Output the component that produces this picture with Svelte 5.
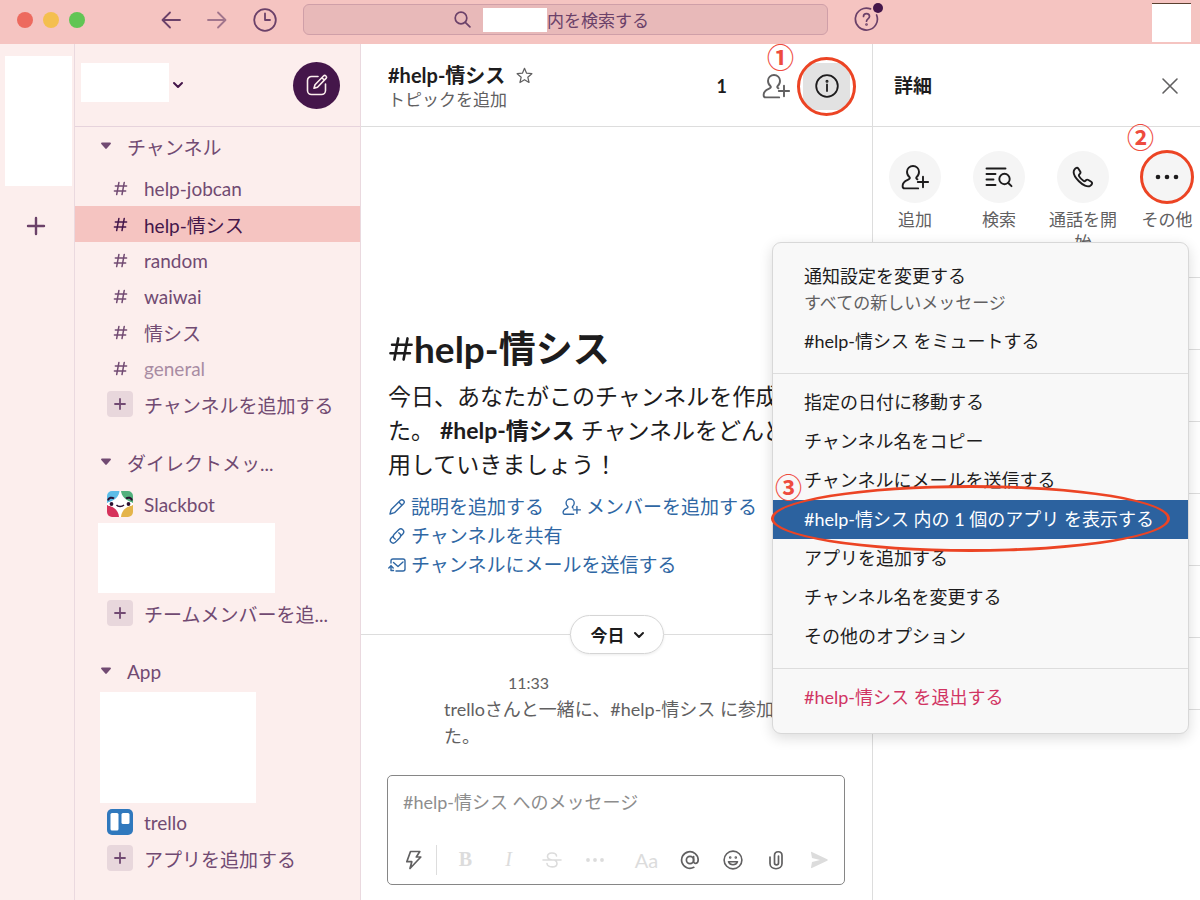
<script>
    let activeChannel = $state('help-情シス');
    let message = $state('');

    const channels = [
        { name: 'help-jobcan' },
        { name: 'help-情シス' },
        { name: 'random' },
        { name: 'waiwai' },
        { name: '情シス' },
        { name: 'general', muted: true }
    ];

    const actions = [
        { label: '追加', icon: 'person' },
        { label: '検索', icon: 'find' },
        { label: '通話を開始', icon: 'phone' },
        { label: 'その他', icon: 'more', step: '②' }
    ];

    const menuGroups = [
        [
            { label: '通知設定を変更する', sub: 'すべての新しいメッセージ' },
            { label: '#help-情シス をミュートする' }
        ],
        [
            { label: '指定の日付に移動する' },
            { label: 'チャンネル名をコピー' },
            { label: 'チャンネルにメールを送信する' },
            { label: '#help-情シス 内の 1 個のアプリ を表示する', selected: true },
            { label: 'アプリを追加する' },
            { label: 'チャンネル名を変更する' },
            { label: 'その他のオプション' }
        ],
        [{ label: '#help-情シス を退出する', danger: true }]
    ];

    const detailRows = [1, 2, 3, 4, 5, 6, 7];
</script>

{#snippet hash(size)}
    <svg class="icon" width={size} height={size} viewBox="0 0 16 16" stroke-width="1.6">
        <path d="M6.3 1.500 3.900 14.500M12 1.500 9.600 14.500M2.500 5.400h12M1.500 10.600h12" />
    </svg>
{/snippet}

{#snippet person(size, weight)}
    <svg class="icon" width={size} height={size} viewBox="0 0 28 28" stroke-width={weight}>
        <path d="M15.500 14.200c1.600-1.200 2.500-3.200 2.500-5.400C18 5.500 15.200 3 12 3S6 5.500 6 8.800c0 2.200 1 4.200 2.600 5.400.6 1.100-.2 1.900-1.900 2.600C3.800 18 1.600 19.700 1.600 23c0 1.500.7 2.400 2 2.400h13.600M15.500 14.200c-.5.800-.2 1.500.9 2.100M22 13.800v10.400M16.800 19h10.400" />
    </svg>
{/snippet}

{#snippet chevron()}
    <svg class="icon" width="12" height="12" viewBox="0 0 12 12" stroke-width="2">
        <path d="m2 4 4 4 4-4" />
    </svg>
{/snippet}

{#snippet sectionHead(title)}
    <button class="section-head">
        <svg width="10" height="8" viewBox="0 0 10 8"><path d="M1 .6h8c.9 0 1.200.8.700 1.400L5.700 6.500c-.4.500-1 .500-1.400 0L.3 2C-.2 1.400.1.600 1 .600z" fill="currentColor" /></svg>
        {title}
    </button>
{/snippet}

{#snippet addRow(label)}
    <button class="row">
        <span class="plus">
            <svg class="icon" width="12" height="12" viewBox="0 0 12 12" stroke-width="1.8"><path d="M6 1v10M1 6h10" /></svg>
        </span>
        <span>{label}</span>
    </button>
{/snippet}

<div class="app">
    <header class="topbar">
        <div class="top-left">
            <div class="lights"><i class="red"></i><i class="yellow"></i><i class="green"></i></div>
            <nav>
                <button aria-label="戻る">
                    <svg class="icon" width="20" height="18" viewBox="0 0 20 18" stroke-width="1.8"><path d="M19 9H2M9 1.500 1.500 9 9 16.500" /></svg>
                </button>
                <button class="dim" aria-label="進む">
                    <svg class="icon" width="20" height="18" viewBox="0 0 20 18" stroke-width="1.8"><path d="M1 9h17M11 1.500 18.500 9 11 16.500" /></svg>
                </button>
                <button aria-label="履歴">
                    <svg class="icon" width="24" height="24" viewBox="0 0 24 24" stroke-width="1.8"><circle cx="12" cy="12" r="10.800" /><path d="M12 5.500V12h5" /></svg>
                </button>
            </nav>
        </div>
        <button class="search">
            <svg class="icon" width="17" height="17" viewBox="0 0 17 17" stroke-width="1.7"><circle cx="7" cy="7" r="5.800" /><path d="m11.300 11.300 4.600 4.600" /></svg>
            <span class="search-name"></span>
            <span>内を検索する</span>
        </button>
        <div class="top-right">
            <button aria-label="ヘルプ">
                <svg class="icon" width="30" height="32" viewBox="0 0 30 32" stroke-width="1.7">
                    <path d="M16.500 5.900A11 11 0 1 0 22.600 12" />
                    <path d="M9.500 13.400c0-3.700 6-3.700 6 0 0 2.500-3 2.300-3 4.800" />
                    <circle cx="12.500" cy="21.500" r=".5" />
                    <circle cx="24" cy="5" r="5" fill="#44164a" stroke="none" />
                </svg>
            </button>
            <div class="me"></div>
        </div>
    </header>

    <div class="body">
        <aside class="rail">
            <div class="workspace"></div>
            <button aria-label="ワークスペースを追加">
                <svg class="icon" width="20" height="20" viewBox="0 0 20 20" stroke-width="2.400"><path d="M10 2v16M2 10h16" /></svg>
            </button>
        </aside>

        <aside class="sidebar">
            <div class="team">
                <button class="team-name" aria-label="ワークスペース"><span></span>{@render chevron()}</button>
                <button class="compose" aria-label="新規メッセージ">
                    <svg class="icon" width="22" height="22" viewBox="0 0 22 22" stroke-width="1.600">
                        <path d="M12 2.500H5.500a4 4 0 0 0-4 4v10a4 4 0 0 0 4 4h10a4 4 0 0 0 4-4V10" />
                        <path d="M8 14.200 9 10.800 17.500 2c1.600-1.500 4 .7 2.500 2.400l-8.500 8.800zM16 3.800l2.300 2.300" />
                    </svg>
                </button>
            </div>

            <section>
                {@render sectionHead('チャンネル')}
                {#each channels as channel}
                    <button
                        class="row"
                        class:active={channel.name === activeChannel}
                        onclick={() => (activeChannel = channel.name)}
                    >
                        <span class="lead">{@render hash(15)}</span>
                        <span class:muted={channel.muted}>{channel.name}</span>
                    </button>
                {/each}
                {@render addRow('チャンネルを追加する')}
            </section>

            <section>
                {@render sectionHead('ダイレクトメッ...')}
                <button class="row">
                    <svg width="26" height="26" viewBox="0 0 26 26">
                        <rect width="26" height="26" rx="5" fill="#fff" />
                        <path d="M5 0h7.500C12 5 9 9 0 12V5a5 5 0 0 1 5-5z" fill="#5cbde8" />
                        <path d="M14 0h7a5 5 0 0 1 5 5v7c-8-3-11.500-7-12-12z" fill="#52b07c" />
                        <path d="M0 14c8 2 11.500 6 12 12H5a5 5 0 0 1-5-5z" fill="#d6325b" />
                        <path d="M26 14c-8 2-11.500 6-12 12h7a5 5 0 0 0 5-5z" fill="#e4b44a" />
                        <path d="M1 9.500c.5-3 4-3.500 6-2M25 9.500c-.5-3-4-3.500-6-2" fill="none" stroke="#2b1030" stroke-width="2" />
                        <path d="M1 11.500h6v2.500l-2 1.500-4-1zM25 11.500h-6v2.500l2 1.500 4-1z" fill="#fff" />
                        <circle cx="4.500" cy="13" r="1.900" fill="#2b1030" />
                        <circle cx="21.500" cy="13" r="1.900" fill="#2b1030" />
                        <path d="M9.500 14c1.500 2 5.500 2 7.500 0" fill="none" stroke="#2b1030" stroke-width="1.300" />
                    </svg>
                    <span>Slackbot</span>
                </button>
                <div class="blank people"></div>
                {@render addRow('チームメンバーを追...')}
            </section>

            <section>
                {@render sectionHead('App')}
                <div class="blank apps"></div>
                <button class="row">
                    <svg width="26" height="26" viewBox="0 0 26 26">
                        <rect width="26" height="26" rx="5" fill="#2f78bd" />
                        <rect x="3.500" y="4" width="8" height="17.500" rx="1.500" fill="#fff" />
                        <rect x="14.500" y="4" width="8" height="11" rx="1.500" fill="#fff" />
                    </svg>
                    <span>trello</span>
                </button>
                {@render addRow('アプリを追加する')}
            </section>
        </aside>

        <main>
            <div class="pane-head">
                <div class="channel">
                    <h2>
                        #help-情シス
                        <svg class="icon" width="17" height="17" viewBox="0 0 18 18" stroke-width="1.300"><path d="m9 1.400 2.200 5.200 5.600.5-4.300 3.700 1.300 5.600L9 13.400l-4.800 3 1.300-5.600L1.200 7.100l5.600-.5z" /></svg>
                    </h2>
                    <p>トピックを追加</p>
                </div>
                <span class="count">1</span>
                <button aria-label="メンバーを追加">{@render person(28, 1.9)}</button>
                <div class="info-wrap">
                    <button class="info" aria-label="詳細">
                        <svg class="icon" width="24" height="24" viewBox="0 0 24 24" stroke-width="1.800"><circle cx="12" cy="12" r="10.800" /><path d="M12 10.500V17" /><circle cx="12" cy="7.200" r=".6" /></svg>
                    </button>
                    <span class="ring"></span>
                    <span class="step">①</span>
                </div>
            </div>

            <div class="history">
                <h1>{@render hash(26)}help-情シス</h1>
                <p class="intro">
                    今日、あなたがこのチャンネルを作成しました。 <b>#help-情シス</b> チャンネルをどんどん活用していきましょう！
                </p>
                <div class="links">
                    <a href="#description">
                        <svg class="icon" width="18" height="18" viewBox="0 0 18 18" stroke-width="1.400"><path d="M2 16l1.200-4.600L12.500 2.300c2-1.800 4.900 1 3.200 3.100L6.500 14.700zM10.800 4l3.200 3.200" /></svg>
                        説明を追加する
                    </a>
                    <a href="#members">{@render person(19, 2)}メンバーを追加する</a>
                    <a href="#share">
                        <svg class="icon" width="18" height="18" viewBox="0 0 18 18" stroke-width="1.400"><path d="M7.200 12.200C5 11 4.800 8.800 6.200 7.300L10.700 2.800c2.800-2.500 6.600 1 4.300 3.900L12.600 9.200M10.800 5.800c2.200 1.200 2.400 3.400 1 4.900L7.300 15.200c-2.800 2.500-6.600-1-4.300-3.900L5.400 8.800" /></svg>
                        チャンネルを共有
                    </a>
                    <a href="#mail">
                        <svg class="icon" width="18" height="18" viewBox="0 0 18 18" stroke-width="1.400"><path d="M3 7V5c0-1.500.7-2 2-2h10c1.300 0 2 .7 2 2v8c0 1.300-.7 2-2 2H8M5.500 6.500l4.500 4 5-4.500M5.500 14.500H3V10M.800 12 3 9.600 5.200 12" /></svg>
                        チャンネルにメールを送信する
                    </a>
                </div>

                <div class="day"><button>今日 {@render chevron()}</button></div>

                <div class="message">
                    <time>11:33</time>
                    <p>trelloさんと一緒に、#help-情シス に参加しました。</p>
                </div>
            </div>

            <div class="composer">
                <textarea rows="1" aria-label="メッセージ" placeholder="#help-情シス へのメッセージ" bind:value={message}></textarea>
                <div class="tools">
                    <button class="shortcut" aria-label="ショートカット">
                        <svg class="icon" width="18" height="20" viewBox="0 0 18 20" stroke-width="1.700"><path d="M5.500 1.500h9.300L11.300 7h4.500L5 18.500l1.800-6.800H1.800z" /></svg>
                    </button>
                    <button class="off serif bold">B</button>
                    <button class="off serif italic">I</button>
                    <button class="off" aria-label="取り消し線">
                        <svg class="icon" width="20" height="18" viewBox="0 0 20 18" stroke-width="1.600"><path d="M1 9h18M14.500 5c-.5-4-9-4-9 .5C5.500 7.500 7 8.500 10 9M5 12.500c.5 4.500 10 4.500 10 0 0-1.500-.7-2.500-2-3.200" /></svg>
                    </button>
                    <button class="off" aria-label="その他の書式">
                        <svg width="18" height="4" viewBox="0 0 18 4" fill="currentColor"><circle cx="2" cy="2" r="1.900" /><circle cx="9" cy="2" r="1.900" /><circle cx="16" cy="2" r="1.900" /></svg>
                    </button>
                    <span class="fill"></span>
                    <button class="off">Aa</button>
                    <button aria-label="メンション">
                        <svg class="icon" width="20" height="20" viewBox="0 0 20 20" stroke-width="1.700"><circle cx="10" cy="10" r="3.600" /><path d="M13.600 6.600v4.600c0 3.200 4.600 3 4.600-1.400A8.300 8.300 0 1 0 13.800 17.300" /></svg>
                    </button>
                    <button aria-label="絵文字">
                        <svg class="icon" width="20" height="20" viewBox="0 0 20 20" stroke-width="1.600"><circle cx="10" cy="10" r="8.900" /><path d="M5.500 11.800c1.500 4 7.500 4 9 0z" /><circle cx="7.200" cy="7.500" r=".5" /><circle cx="12.800" cy="7.500" r=".5" /></svg>
                    </button>
                    <button aria-label="ファイルを添付">
                        <svg class="icon" width="16" height="20" viewBox="0 0 16 20" stroke-width="1.700"><path d="M2 7v6.500c0 7 12 7 12 0V5.500c0-5-7.500-5-7.500 0V13c0 2.500 4 2.500 4 0V6" /></svg>
                    </button>
                    <button class="off" aria-label="送信">
                        <svg width="18" height="18" viewBox="0 0 18 18"><path d="M1 1.500c0-.6.4-.8.900-.6l15.300 7.300c.7.400.7 1.200 0 1.600L1.900 17.100c-.5.200-.9 0-.9-.6l1-5.500L10 9 2 7z" fill="currentColor" /></svg>
                    </button>
                </div>
            </div>
        </main>

        <aside class="details">
            <div class="pane-head">
                <h2>詳細</h2>
                <button aria-label="閉じる">
                    <svg class="icon" width="18" height="18" viewBox="0 0 18 18" stroke-width="1.600"><path d="m2 2 14 14M16 2 2 16" /></svg>
                </button>
            </div>
            <div class="actions">
                {#each actions as action}
                    <button>
                        <span class="disc">
                            {#if action.icon === 'person'}
                                {@render person(28, 1.9)}
                            {:else if action.icon === 'find'}
                                <svg class="icon" width="28" height="22" viewBox="0 0 28 22" stroke-width="1.900"><path d="M1.500 2.500h19M1.500 8h9M1.500 13.500h7M1.500 19h9" /><circle cx="19.500" cy="13" r="5.200" /><path d="m23.300 17 3.200 3.200" /></svg>
                            {:else if action.icon === 'phone'}
                                <svg class="icon" width="22" height="22" viewBox="0 0 22 22" stroke-width="1.900"><path d="M2.500 3.500C3.500 2 5.200.900 6.300 2.500l1.900 3c.7 1.200.2 2-.7 2.700-.8.700-.8 1.300-.3 2.200 1 1.800 2.500 3.300 4.200 4.400.9.600 1.600.5 2.300-.3.800-.9 1.600-1.200 2.700-.5l2.800 1.800c1.800 1.200.5 2.800-.9 3.900C13 23.500-1.500 9.500 2.500 3.500z" /></svg>
                            {:else}
                                <svg width="24" height="6" viewBox="0 0 24 6" fill="currentColor"><circle cx="3" cy="3" r="2.300" /><circle cx="12" cy="3" r="2.300" /><circle cx="21" cy="3" r="2.300" /></svg>
                                <span class="ring"></span>
                                <span class="step">{action.step}</span>
                            {/if}
                        </span>
                        <span class="label">{action.label}</span>
                    </button>
                {/each}
            </div>
            <div class="rows">
                {#each detailRows as row (row)}
                    <div></div>
                {/each}
            </div>

            <div class="menu" role="menu">
                {#each menuGroups as group}
                    <div class="group">
                        {#each group as item}
                            <button role="menuitem" class:selected={item.selected} class:danger={item.danger}>
                                {item.label}
                                {#if item.sub}<small>{item.sub}</small>{/if}
                                {#if item.selected}
                                    <span class="oval"></span>
                                    <span class="step">③</span>
                                {/if}
                            </button>
                        {/each}
                    </div>
                {/each}
            </div>
        </aside>
    </div>
</div>

<style>
    :global(body) {
        margin: 0;
    }

    .app {
        display: flex;
        flex-direction: column;
        height: 100vh;
        overflow: hidden;
        font-family: Lato, 'Noto Sans CJK JP', sans-serif;
        font-size: 18px;
        color: #1d1c1d;
        background: #fff;
    }

    .app *,
    .app *::before {
        box-sizing: border-box;
    }

    button {
        display: flex;
        align-items: center;
        margin: 0;
        padding: 0;
        border: 0;
        background: none;
        color: inherit;
        font: inherit;
        cursor: pointer;
    }

    h1, h2, p {
        margin: 0;
    }

    svg {
        flex: none;
    }

    .icon {
        fill: none;
        stroke: currentColor;
        stroke-linecap: round;
        stroke-linejoin: round;
    }

    /* top bar */
    .topbar {
        display: flex;
        align-items: center;
        flex: none;
        height: 44px;
        padding-bottom: 5px;
        background: #f5c4c1;
        color: #6b4169;
    }

    .top-left {
        display: flex;
        align-items: center;
        justify-content: space-between;
        width: 303px;
        padding: 0 26px 0 17px;
    }

    .lights {
        display: flex;
        gap: 10px;
    }

    .lights i {
        width: 16px;
        height: 16px;
        border-radius: 50%;
    }

    .red { background: #ed6a5e; }
    .yellow { background: #f4bf4f; }
    .green { background: #61c554; }

    nav {
        display: flex;
        align-items: center;
        gap: 26px;
    }

    nav .dim {
        opacity: 0.6;
    }

    .search {
        flex: 1;
        justify-content: center;
        height: 31px;
        padding-right: 28px;
        border: 1px solid #cf9fa8;
        border-radius: 6px;
        background: #e8b9b9;
        font-size: 17px;
    }

    .search-name {
        width: 64px;
        height: 24px;
        margin-left: 12px;
        background: #fff;
    }

    .top-right {
        display: flex;
        align-items: center;
        justify-content: space-between;
        width: 372px;
        height: 39px;
        padding: 0 9px 0 26px;
    }

    .top-right button {
        padding-bottom: 2px;
    }

    .me {
        align-self: flex-end;
        width: 39px;
        height: 39px;
        margin-bottom: -3px;
        border-top: 1px solid #5a4030;
        background: #fff;
    }

    .body {
        display: flex;
        flex: 1;
        min-height: 0;
    }

    /* workspace rail */
    .rail {
        display: flex;
        flex-direction: column;
        align-items: center;
        flex: none;
        gap: 30px;
        width: 75px;
        padding: 12px 2px 0 0;
        border-right: 1px solid #ead9df;
        background: #fceeed;
        color: #6b4169;
    }

    .workspace {
        align-self: flex-end;
        width: 67px;
        height: 130px;
        background: #fff;
    }

    /* channel list */
    .sidebar {
        flex: none;
        width: 286px;
        border-right: 1px solid #ead9df;
        background: #fceeed;
        color: #714a72;
        font-size: 19px;
    }

    .team {
        display: flex;
        align-items: center;
        justify-content: space-between;
        height: 83px;
        padding: 0 20px 0 6px;
        border-bottom: 1px solid #e6d3dc;
    }

    .team-name {
        gap: 3px;
        color: #44164a;
    }

    .team-name span {
        width: 88px;
        height: 39px;
        margin-bottom: 6px;
        background: #fff;
    }

    .compose {
        justify-content: center;
        width: 47px;
        height: 47px;
        border-radius: 50%;
        background: #44164a;
        color: #fceeed;
    }

    section + section {
        margin-top: 21px;
    }

    .section-head {
        gap: 16px;
        width: 100%;
        height: 38px;
        margin-bottom: 5px;
        padding-left: 26px;
    }

    .row {
        gap: 11px;
        width: 100%;
        height: 36px;
        padding-left: 32px;
        white-space: nowrap;
    }

    .row.active {
        background: #f5c4c1;
        color: #44164a;
    }

    .lead,
    .plus {
        display: grid;
        place-items: center;
        width: 26px;
        height: 26px;
    }

    .plus {
        border-radius: 4px;
        background: #e8d7dc;
    }

    .muted {
        opacity: 0.6;
    }

    .blank {
        background: #fff;
    }

    .people {
        width: 177px;
        height: 70px;
        margin: 1px 0 2px 23px;
    }

    .apps {
        width: 156px;
        height: 111px;
        margin: -3px 0 1px 25px;
    }

    /* channel pane */
    main {
        display: flex;
        flex-direction: column;
        flex: 1;
        min-width: 0;
    }

    .pane-head {
        display: flex;
        align-items: center;
        flex: none;
        height: 83px;
        padding: 2px 21px 0 27px;
        border-bottom: 1px solid #ddd;
    }

    .pane-head h2 {
        display: flex;
        align-items: center;
        gap: 11px;
        font-size: 19px;
        line-height: 26px;
        font-weight: 700;
    }

    .channel {
        flex: 1;
        padding-top: 2px;
    }

    .pane-head .channel h2 {
        font-size: 20px;
    }

    .channel p {
        color: #616061;
        font-size: 17px;
        line-height: 24px;
    }

    .channel svg,
    .pane-head button {
        color: #616061;
    }

    .count {
        margin-right: 35px;
        font-weight: 700;
    }

    .info-wrap {
        position: relative;
        margin-left: 13px;
        margin-right: 1px;
    }

    .pane-head .info {
        justify-content: center;
        width: 47px;
        height: 47px;
        border-radius: 12px;
        background: #e2e2e2;
        color: #1d1c1d;
    }

    .history {
        display: flex;
        flex-direction: column;
        justify-content: flex-end;
        flex: 1;
        min-height: 0;
        padding-bottom: 25px;
    }

    h1 {
        display: flex;
        align-items: center;
        padding-left: 27px;
        font-size: 37px;
        line-height: 48px;
        font-weight: 700;
    }

    .intro {
        padding: 6px 20px 11px 27px;
        font-size: 23px;
        line-height: 34px;
    }

    .links {
        display: flex;
        flex-wrap: wrap;
        column-gap: 18px;
        padding: 0 14px 0 27px;
        font-size: 19px;
        line-height: 29px;
    }

    .links a {
        display: flex;
        align-items: center;
        gap: 5px;
        color: #2f67a4;
        text-decoration: none;
        white-space: nowrap;
    }

    .day {
        display: flex;
        align-items: center;
        margin: 36px 0 15px;
    }

    .day::before,
    .day::after {
        content: '';
        flex: 1;
        height: 1px;
        background: #ddd;
    }

    .day button {
        gap: 8px;
        height: 39px;
        padding: 0 18px 0 20px;
        border: 1px solid #d5d5d5;
        border-radius: 20px;
        box-shadow: 0 1px 3px rgba(0, 0, 0, 0.08);
        font-size: 17px;
        font-weight: 700;
    }

    .message {
        padding: 0 27px 0 83px;
        color: #616061;
        line-height: 27px;
    }

    .message time {
        padding-left: 64px;
        font-size: 16px;
    }

    .composer {
        display: flex;
        flex-direction: column;
        flex: none;
        height: 110px;
        margin: 0 27px 15px 26px;
        padding-bottom: 3px;
        border: 1px solid #868686;
        border-radius: 5px;
    }

    textarea {
        flex: 1;
        padding: 13px 15px 0;
        border: 0;
        outline: 0;
        resize: none;
        background: none;
        color: #1d1c1d;
        font: inherit;
        line-height: 27px;
    }

    textarea::placeholder {
        color: #8d8d8d;
        opacity: 1;
    }

    .tools {
        display: flex;
        align-items: center;
        height: 43px;
        padding: 0 4px;
        color: #616061;
    }

    .tools button {
        justify-content: center;
        width: 43px;
        height: 30px;
    }

    .tools .shortcut {
        width: 45px;
        margin-right: 7px;
        border-right: 1px solid #ddd;
    }

    .tools .off {
        color: #dcdcdc;
        font-size: 20px;
    }

    .tools .serif {
        font-family: 'Liberation Serif', serif;
    }

    .bold { font-weight: 700; }
    .italic { font-style: italic; }

    .fill {
        flex: 1;
    }

    /* details pane */
    .details {
        position: relative;
        flex: none;
        width: 328px;
        border-left: 1px solid #ddd;
    }

    .details .pane-head {
        justify-content: space-between;
        padding-left: 21px;
    }

    .actions {
        display: flex;
        padding-top: 24px;
    }

    .actions button {
        flex: none;
        flex-direction: column;
        gap: 5px;
        width: 84px;
    }

    .disc {
        position: relative;
        display: grid;
        place-items: center;
        width: 52px;
        height: 52px;
        border-radius: 50%;
        background: #f5f5f5;
    }

    .label {
        width: 70px;
        height: 46px;
        color: #616061;
        font-size: 17px;
        line-height: 23px;
        text-align: center;
        word-break: break-all;
    }

    .rows {
        margin-top: 23px;
    }

    .rows div {
        height: 72px;
        border-top: 1px solid #ddd;
    }

    /* overflow menu */
    .menu {
        position: absolute;
        top: 198px;
        right: 11px;
        z-index: 2;
        width: 417px;
        padding: 5px 0 4px;
        border: 1px solid #d8d8d8;
        border-radius: 9px;
        background: #f8f8f8;
        box-shadow: 0 4px 14px rgba(0, 0, 0, 0.14);
    }

    .group {
        padding: 9px 0 12px;
    }

    .group + .group {
        border-top: 1px solid #ddd;
    }

    .menu button {
        position: relative;
        display: block;
        width: 100%;
        padding: 6px 31px;
        line-height: 27px;
        text-align: left;
        white-space: nowrap;
    }

    .menu small {
        display: block;
        color: #616061;
        font-size: 17px;
        line-height: 26px;
    }

    .menu .selected {
        z-index: 1;
        background: #2c629f;
        color: #fff;
    }

    .menu .danger {
        color: #d13463;
    }

    /* red walkthrough marks */
    .ring,
    .oval {
        position: absolute;
        inset: -6px;
        border: 3px solid #ec4424;
        border-radius: 50%;
        pointer-events: none;
    }

    .disc .ring {
        inset: -1px;
    }

    .oval {
        inset: -15px 18px -13px -2px;
    }

    .step {
        position: absolute;
        left: -36px;
        top: -20px;
        color: #ee4b3e;
        font-family: 'Noto Sans CJK JP', sans-serif;
        font-size: 27px;
        font-weight: 700;
        line-height: 27px;
    }

    .disc .step {
        left: -14px;
        top: -28px;
    }

    .selected .step {
        left: 2px;
        top: -27px;
    }
</style>
